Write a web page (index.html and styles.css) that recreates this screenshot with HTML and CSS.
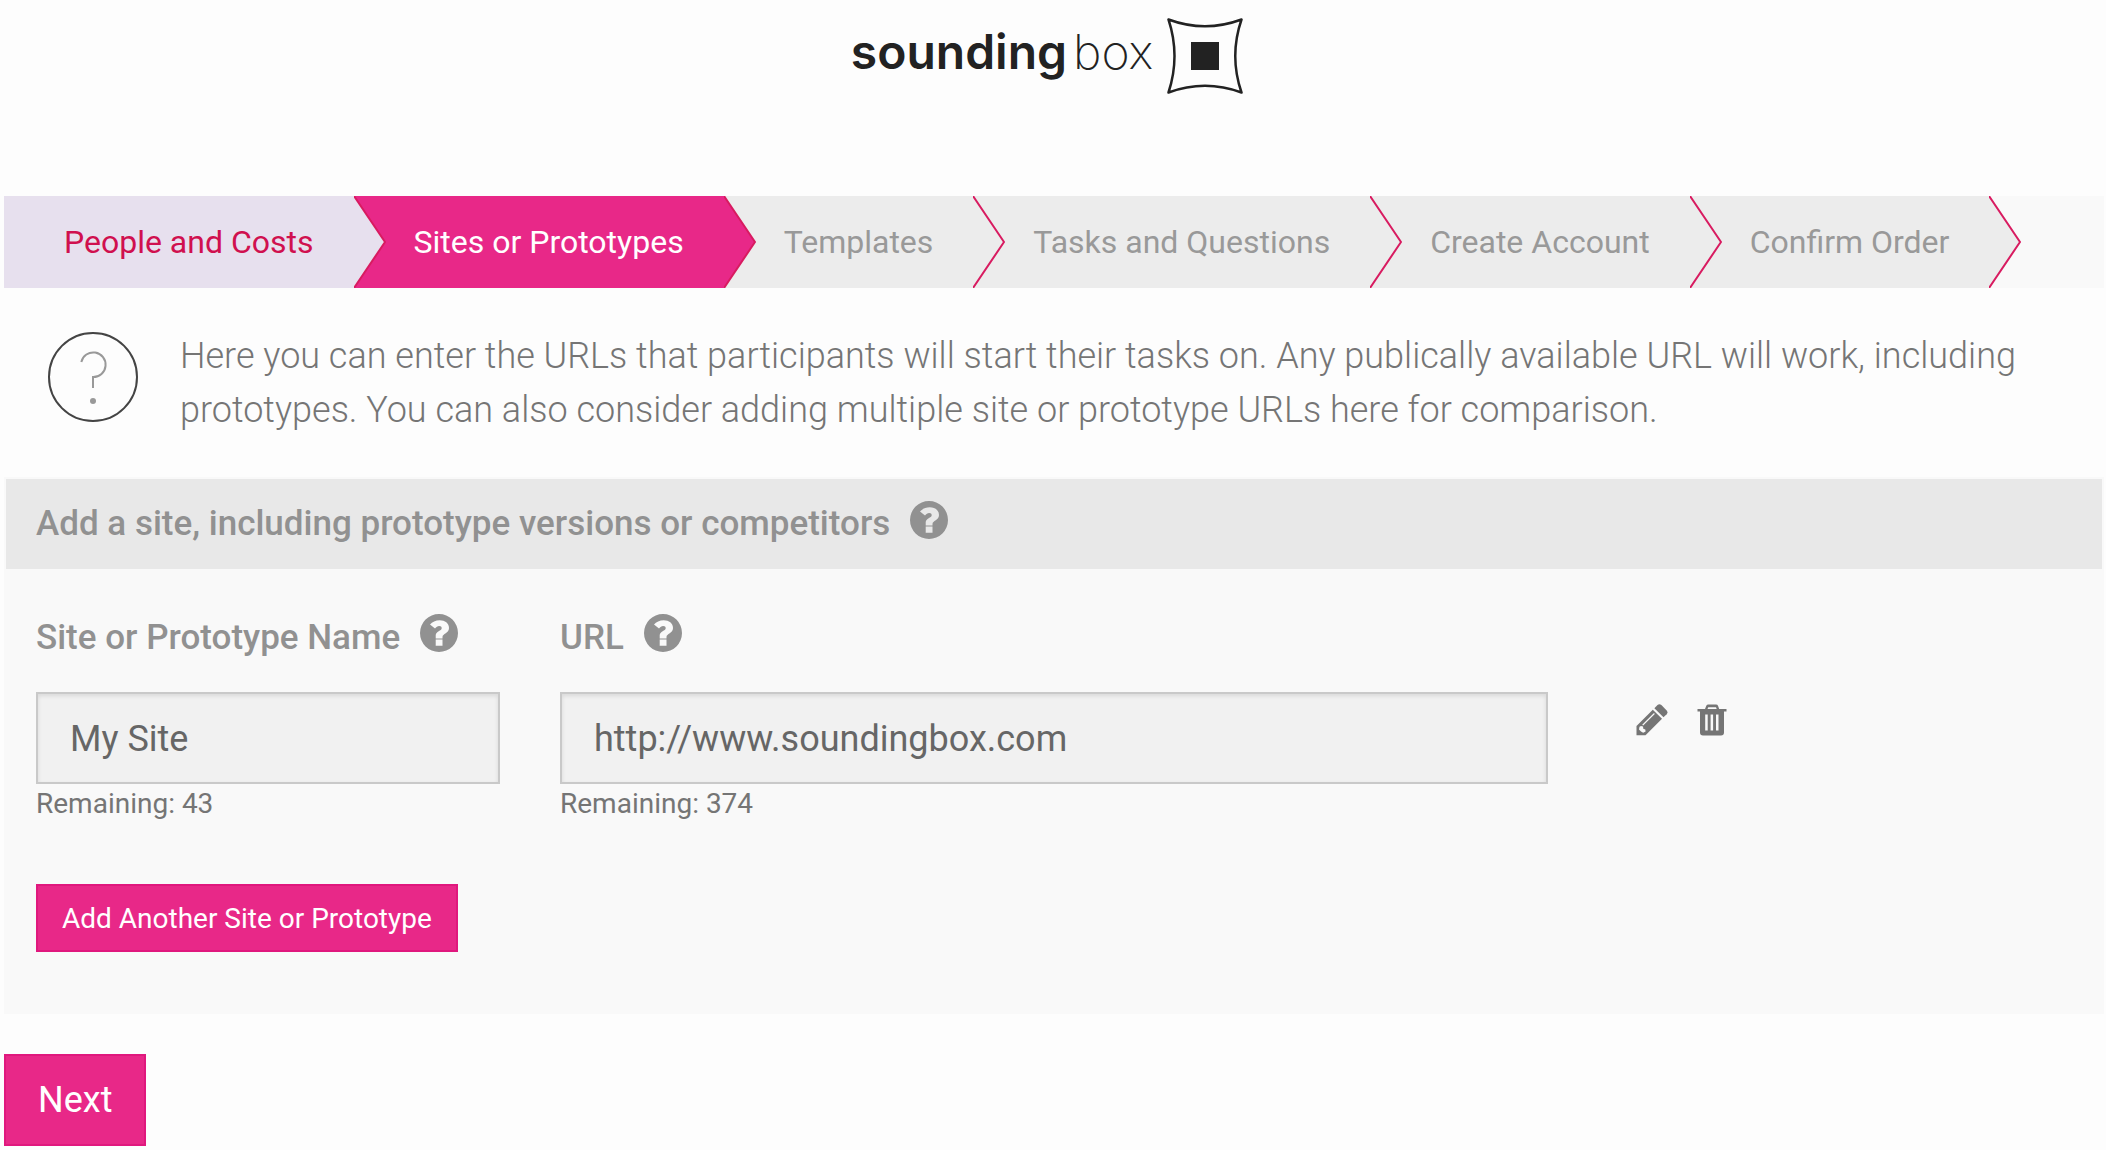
FILE: index.html
```html
<!DOCTYPE html>
<html lang="en">

<head>
    <meta charset="UTF-8">
    <meta name="viewport" content="width=device-width, initial-scale=1.0">
    <title>Sites or Prototypes</title>
    <link rel="stylesheet" href="styles.css">
</head>

<body>
    <!-- shared icons -->
    <svg class="sprite" aria-hidden="true">
        <symbol id="icon-help" viewBox="0 0 38 38">
            <path fill-rule="evenodd" d="M19 0A19 19 0 0 1 19 38A19 19 0 0 1 19 0Z M10 10.500C12.300 8 15.500 6.300 19.800 6.300C25 6.300 29 9.200 29 14C29 19.500 22.500 19.500 22.500 23V24.500H15.700V21.500C15.700 17 21.700 17 21.700 14.200C21.700 12.800 20.800 12 19.200 12C17.500 12 16.300 13 15 14.600Z M15.700 25.500H22.500V31.700H15.700Z" />
        </symbol>
        <symbol id="icon-arrow" viewBox="0 0 32 92">
            <path d="M0 0L31 46L0 92" />
        </symbol>
    </svg>

    <header class="header">
        <a class="logo" href="#">
            <span class="logo-text">sounding<span class="logo-light">box</span></span>
            <svg class="logo-mark" viewBox="0 0 76 76" aria-hidden="true">
                <path d="M1.500 1.500Q38 15 74.500 1.500Q62 38 74.500 74.500Q38 61 1.500 74.500Q13.500 38 1.500 1.500Z" />
                <rect x="24" y="24" width="28" height="28" />
            </svg>
        </a>
    </header>

    <nav class="steps">
        <a class="step done" href="#">People and Costs
            <svg class="arrow" aria-hidden="true"><use href="#icon-arrow" /></svg>
        </a>
        <a class="step active" href="#">Sites or Prototypes
            <svg class="arrow" aria-hidden="true"><use href="#icon-arrow" /></svg>
        </a>
        <a class="step" href="#">Templates
            <svg class="arrow" aria-hidden="true"><use href="#icon-arrow" /></svg>
        </a>
        <a class="step" href="#">Tasks and Questions
            <svg class="arrow" aria-hidden="true"><use href="#icon-arrow" /></svg>
        </a>
        <a class="step" href="#">Create Account
            <svg class="arrow" aria-hidden="true"><use href="#icon-arrow" /></svg>
        </a>
        <a class="step" href="#">Confirm Order
            <svg class="arrow" aria-hidden="true"><use href="#icon-arrow" /></svg>
        </a>
    </nav>

    <main>
        <div class="intro">
            <svg class="intro-icon" viewBox="0 0 90 90" aria-hidden="true">
                <circle class="ring" cx="45" cy="45" r="44" />
                <path class="hook" d="M33.300 30A12.300 12.300 0 1 1 45 45V56" />
                <circle class="dot" cx="45" cy="69" r="3" />
            </svg>
            <p>Here you can enter the URLs that participants will start their tasks on. Any publically available URL will work, including prototypes. You can also consider adding multiple site or prototype URLs here for comparison.</p>
        </div>

        <form id="siteForm">
            <section class="panel">
                <h2 class="panel-title">Add a site, including prototype versions or competitors
                    <svg class="help"><use href="#icon-help" /></svg>
                </h2>

                <div class="panel-body">
                    <div class="site-row">
                        <div class="field field-name">
                            <label for="siteName">Site or Prototype Name
                                <svg class="help"><use href="#icon-help" /></svg>
                            </label>
                            <input type="text" id="siteName" value="My Site">
                            <div class="remaining">Remaining: 43</div>
                        </div>
                        <div class="field field-url">
                            <label for="siteUrl">URL
                                <svg class="help"><use href="#icon-help" /></svg>
                            </label>
                            <input type="text" id="siteUrl" value="http://www.soundingbox.com">
                            <div class="remaining">Remaining: 374</div>
                        </div>
                        <div class="actions">
                            <button type="button" class="icon-button" aria-label="Edit">
                                <svg viewBox="0 0 32 32">
                                    <path fill-rule="evenodd" d="M0.500 22L16.800 5.700L26 14.800L9.500 31.300H0.500ZM6.200 20.700L7.200 21.600L18.800 10L18 9.100ZM3.500 22.800L3 25.500L5 27.500L7.200 28.800L9.600 27.500L9.300 25.400L7.300 24.800L7 22.500L5 22Z" />
                                    <path d="M18.400 4.200L21.500 1.100Q23.400-.5 25.400 1.100L30.700 6.400Q32.200 8.300 30.700 10.200L27.500 13.300Z" />
                                </svg>
                            </button>
                            <button type="button" class="icon-button" aria-label="Delete">
                                <svg viewBox="0 0 32 32">
                                    <path fill-rule="evenodd" d="M1.500 5H9L10.300 1.800Q10.800 .5 12.300 .5H20Q21.500 .5 22 1.800L23.200 5H30.500V7.500H28V28.500Q28 31.500 25 31.500H7Q4 31.500 4 28.500V7.500H1.500ZM11.500 5H20.700L20 3.200H12.300ZM9.200 10.500V26.500H11.700V10.500ZM14.600 10.500V26.500H17.100V10.500ZM20 10.500V26.500H22.500V10.500Z" />
                                </svg>
                            </button>
                        </div>
                    </div>

                    <button type="button" class="button button-small">Add Another Site or Prototype</button>
                </div>
            </section>

            <button type="submit" class="button">Next</button>
        </form>
    </main>
</body>

</html>
```
FILE: styles.css
```css
* {
    box-sizing: border-box;
}

body {
    font-family: Roboto, Arial, sans-serif;
    margin: 0;
    padding: 0 2px 0 4px;
    background-color: #fdfdfd;
    color: #757575;
}

.sprite {
    position: absolute;
    width: 0;
    height: 0;
}

.header {
    display: flex;
    justify-content: center;
    padding: 18px 14px 0 0;
    height: 196px;
}

.logo {
    display: flex;
    gap: 14px;
    height: 76px;
    color: #222;
    text-decoration: none;
}

.logo-text {
    font-family: Inter, Arial, sans-serif;
    font-size: 48px;
    font-weight: 600;
    line-height: 68px;
}

.logo-light {
    font-weight: 200;
    margin-left: 6px;
}

.logo-mark {
    width: 76px;
    height: 76px;
}

.logo-mark path {
    fill: none;
    stroke: #222;
    stroke-width: 2.5;
    stroke-linejoin: round;
}

.logo-mark rect {
    fill: #222;
}

/* progress steps */
.steps {
    display: flex;
    background: #f9f9f9;
}

.step {
    position: relative;
    height: 92px;
    padding: 0 40px 0 60px;
    background: #ececec;
    color: #999;
    font-size: 32px;
    line-height: 93px;
    white-space: nowrap;
    text-decoration: none;
}

.step.done {
    background: #e7e0ee;
    color: #d0104f;
}

.step.active {
    background: #e82888;
    color: #fff;
}

/* the arrow lies over the start of the next step */
.arrow {
    position: absolute;
    top: 0;
    left: 100%;
    z-index: 1;
    width: 32px;
    height: 92px;
    fill: #ececec;
    stroke: #d81b60;
    stroke-width: 2;
}

.step.done .arrow {
    fill: #e7e0ee;
}

.step.active .arrow {
    fill: #e82888;
}

.intro {
    display: flex;
    gap: 42px;
    padding: 41px 44px 40px;
}

.intro-icon {
    flex: none;
    width: 90px;
    height: 90px;
    margin-top: 3px;
    fill: none;
}

.intro-icon .ring {
    stroke: #444;
    stroke-width: 2;
}

.intro-icon .hook {
    stroke: #999;
    stroke-width: 2;
}

.intro-icon .dot {
    fill: #999;
}

.intro p {
    margin: 0;
    font-size: 36px;
    font-weight: 300;
    line-height: 54px;
}

.panel {
    padding: 2px;
    margin-bottom: 40px;
    background: #f9f9f9;
}

.panel-title {
    display: flex;
    gap: 20px;
    margin: 0;
    padding: 0 30px;
    background: #e8e8e8;
    color: #919191;
    font-size: 35px;
    font-weight: 500;
    line-height: 90px;
}

.help {
    width: 38px;
    height: 38px;
    margin-top: 2px;
    fill: #919191;
}

.panel-title .help {
    margin-top: 22px;
}

.panel-body {
    padding: 43px 30px 60px;
}

.site-row {
    display: flex;
    gap: 60px;
    margin-bottom: 60px;
}

.field-name {
    width: 464px;
}

.field-url {
    width: 988px;
}

label {
    display: flex;
    gap: 20px;
    margin-bottom: 28px;
    color: #919191;
    font-size: 35px;
    font-weight: 500;
    line-height: 52px;
}

input {
    display: block;
    width: 100%;
    height: 92px;
    padding: 2px 32px 0;
    border: 2px solid #c9c9c9;
    background: #f1f1f1;
    box-shadow: inset 0 2px 4px rgba(0, 0, 0, 0.1);
    color: #666;
    font-family: inherit;
    font-size: 36px;
}

.remaining {
    font-size: 28px;
    line-height: 40px;
}

.actions {
    display: flex;
    gap: 28px;
    padding: 92px 0 0 28px;
    align-items: flex-start;
}

.icon-button {
    width: 32px;
    height: 32px;
    padding: 0;
    border: none;
    background: none;
    cursor: pointer;
}

.icon-button svg {
    display: block;
    width: 32px;
    height: 32px;
    fill: #757575;
}

.button {
    display: block;
    height: 92px;
    padding: 0 32px;
    border: 2px solid #e0187e;
    background: #e82888;
    color: #fff;
    font-family: inherit;
    font-size: 36px;
    cursor: pointer;
}

.button-small {
    height: 68px;
    padding: 0 24px;
    font-size: 28px;
}
```
